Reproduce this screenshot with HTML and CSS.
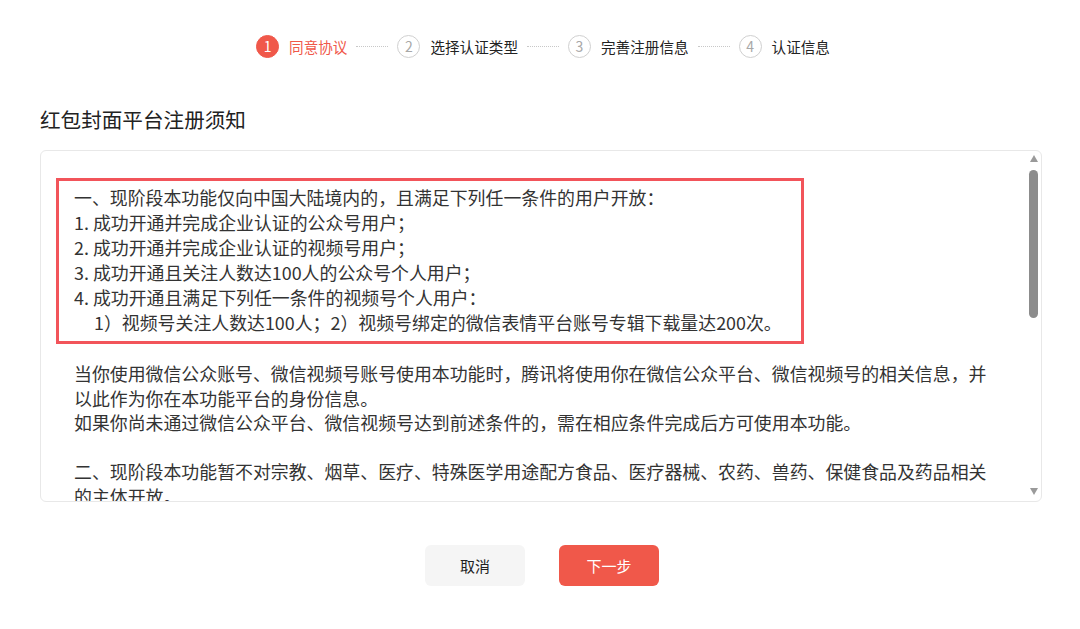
FILE: index.html
```html
<!DOCTYPE html>
<html lang="zh-CN">
<head>
  <meta charset="UTF-8">
  <meta name="viewport" content="width=device-width, initial-scale=1.0">
  <title>红包封面平台注册须知</title>
  <link rel="stylesheet" href="styles.css">
</head>
<body>
  <div class="page">
    <!-- 步骤条 -->
    <ol class="steps">
      <li class="step active"><span class="step-num">1</span><span class="step-label">同意协议</span></li>
      <li class="step-dots"></li>
      <li class="step"><span class="step-num">2</span><span class="step-label">选择认证类型</span></li>
      <li class="step-dots"></li>
      <li class="step"><span class="step-num">3</span><span class="step-label">完善注册信息</span></li>
      <li class="step-dots"></li>
      <li class="step"><span class="step-num">4</span><span class="step-label">认证信息</span></li>
    </ol>

    <h2 class="title">红包封面平台注册须知</h2>

    <div class="notice">
      <div class="notice-body">
        <div class="mark">
          <p>一、现阶段本功能仅向中国大陆境内的，且满足下列任一条件的用户开放：</p>
          <p>1. 成功开通并完成企业认证的公众号用户；</p>
          <p>2. 成功开通并完成企业认证的视频号用户；</p>
          <p>3. 成功开通且关注人数达100人的公众号个人用户；</p>
          <p>4. 成功开通且满足下列任一条件的视频号个人用户：</p>
          <p class="indent">1）视频号关注人数达100人；2）视频号绑定的微信表情平台账号专辑下载量达200次。</p>
        </div>
        <p class="para">当你使用微信公众账号、微信视频号账号使用本功能时，腾讯将使用你在微信公众平台、微信视频号的相关信息，并以此作为你在本功能平台的身份信息。<br>如果你尚未通过微信公众平台、微信视频号达到前述条件的，需在相应条件完成后方可使用本功能。</p>
        <p class="para gap">二、现阶段本功能暂不对宗教、烟草、医疗、特殊医学用途配方食品、医疗器械、农药、兽药、保健食品及药品相关的主体开放。</p>
      </div>
      <div class="scrollbar">
        <span class="arrow up"></span>
        <span class="thumb"></span>
        <span class="arrow down"></span>
      </div>
    </div>

    <div class="actions">
      <button class="btn btn-cancel">取消</button>
      <button class="btn btn-next">下一步</button>
    </div>
  </div>
</body>
</html>
```

FILE: styles.css
```css
:root {
  --primary: #f0584a;
  --text: #333;
  --sub: #999;
  --divider: #e8e8e8;
}
*, *::before, *::after {
  box-sizing: border-box;
}
body, h2, p, ol, li {
  margin: 0;
  padding: 0;
}
body {
  font-family: "Noto Sans CJK SC", "Noto Sans", sans-serif;
  background: #fff;
  color: var(--text);
}
.page {
  padding: 34px 38px 0 40px;
}

/* steps */
.steps {
  list-style: none;
  display: flex;
  align-items: center;
  justify-content: center;
  gap: 9px;
  height: 24px;
  padding-left: 4px;
}
.step {
  display: flex;
  align-items: center;
  gap: 10px;
}
.step-num {
  width: 23px;
  height: 23px;
  border-radius: 50%;
  border: 1px solid #d0d0d0;
  color: #a8a8a8;
  font-size: 14px;
  display: flex;
  align-items: center;
  justify-content: center;
}
.step-label {
  font-size: 14.6px;
  color: #222;
}
.step.active .step-num {
  background: var(--primary);
  border-color: var(--primary);
  color: #fff;
}
.step.active .step-label {
  color: var(--primary);
}
.step-dots {
  width: 32px;
  border-top: 1px dotted #c8c8c8;
}

.title {
  margin-top: 47px;
  font-size: 20.6px;
  line-height: 28px;
  font-weight: normal;
  color: #222;
}

/* notice box */
.notice {
  margin-top: 17px;
  height: 352px;
  border: 1px solid var(--divider);
  border-radius: 6px;
  display: flex;
  overflow: hidden;
}
.notice-body {
  flex: 1;
  overflow: hidden;
  padding: 27px 37px 0 15px;
  font-size: 17.9px;
}
.mark {
  width: 748px;
  border: 3px solid #f2545a;
  padding: 4px 10px 6px 15px;
  line-height: 25px;
  white-space: nowrap;
}
.mark .indent {
  padding-left: 20px;
}
.para {
  margin: 17px 0 0 18px;
  line-height: 24.5px;
}
.para.gap {
  margin-top: 24.5px;
}
.scrollbar {
  flex: 0 0 13px;
  margin-right: 1px;
  display: flex;
  flex-direction: column;
  align-items: center;
  padding: 4px 0 6px;
}
.arrow {
  width: 0;
  height: 0;
  border-left: 4.5px solid transparent;
  border-right: 4.5px solid transparent;
}
.arrow.up {
  border-bottom: 7px solid #9a9a9a;
}
.arrow.down {
  margin-top: auto;
  border-top: 7px solid #9a9a9a;
}
.thumb {
  margin-top: 8px;
  width: 9px;
  height: 148px;
  border-radius: 5px;
  background: #8c8c8c;
}

/* buttons */
.actions {
  margin-top: 43px;
  display: flex;
  justify-content: center;
  gap: 34px;
  padding-left: 2px;
}
.btn {
  width: 100px;
  height: 41px;
  border: none;
  border-radius: 6px;
  font-family: inherit;
  font-size: 15px;
}
.btn-cancel {
  background: #f5f5f5;
  color: #222;
}
.btn-next {
  background: var(--primary);
  color: #fff;
}
```
